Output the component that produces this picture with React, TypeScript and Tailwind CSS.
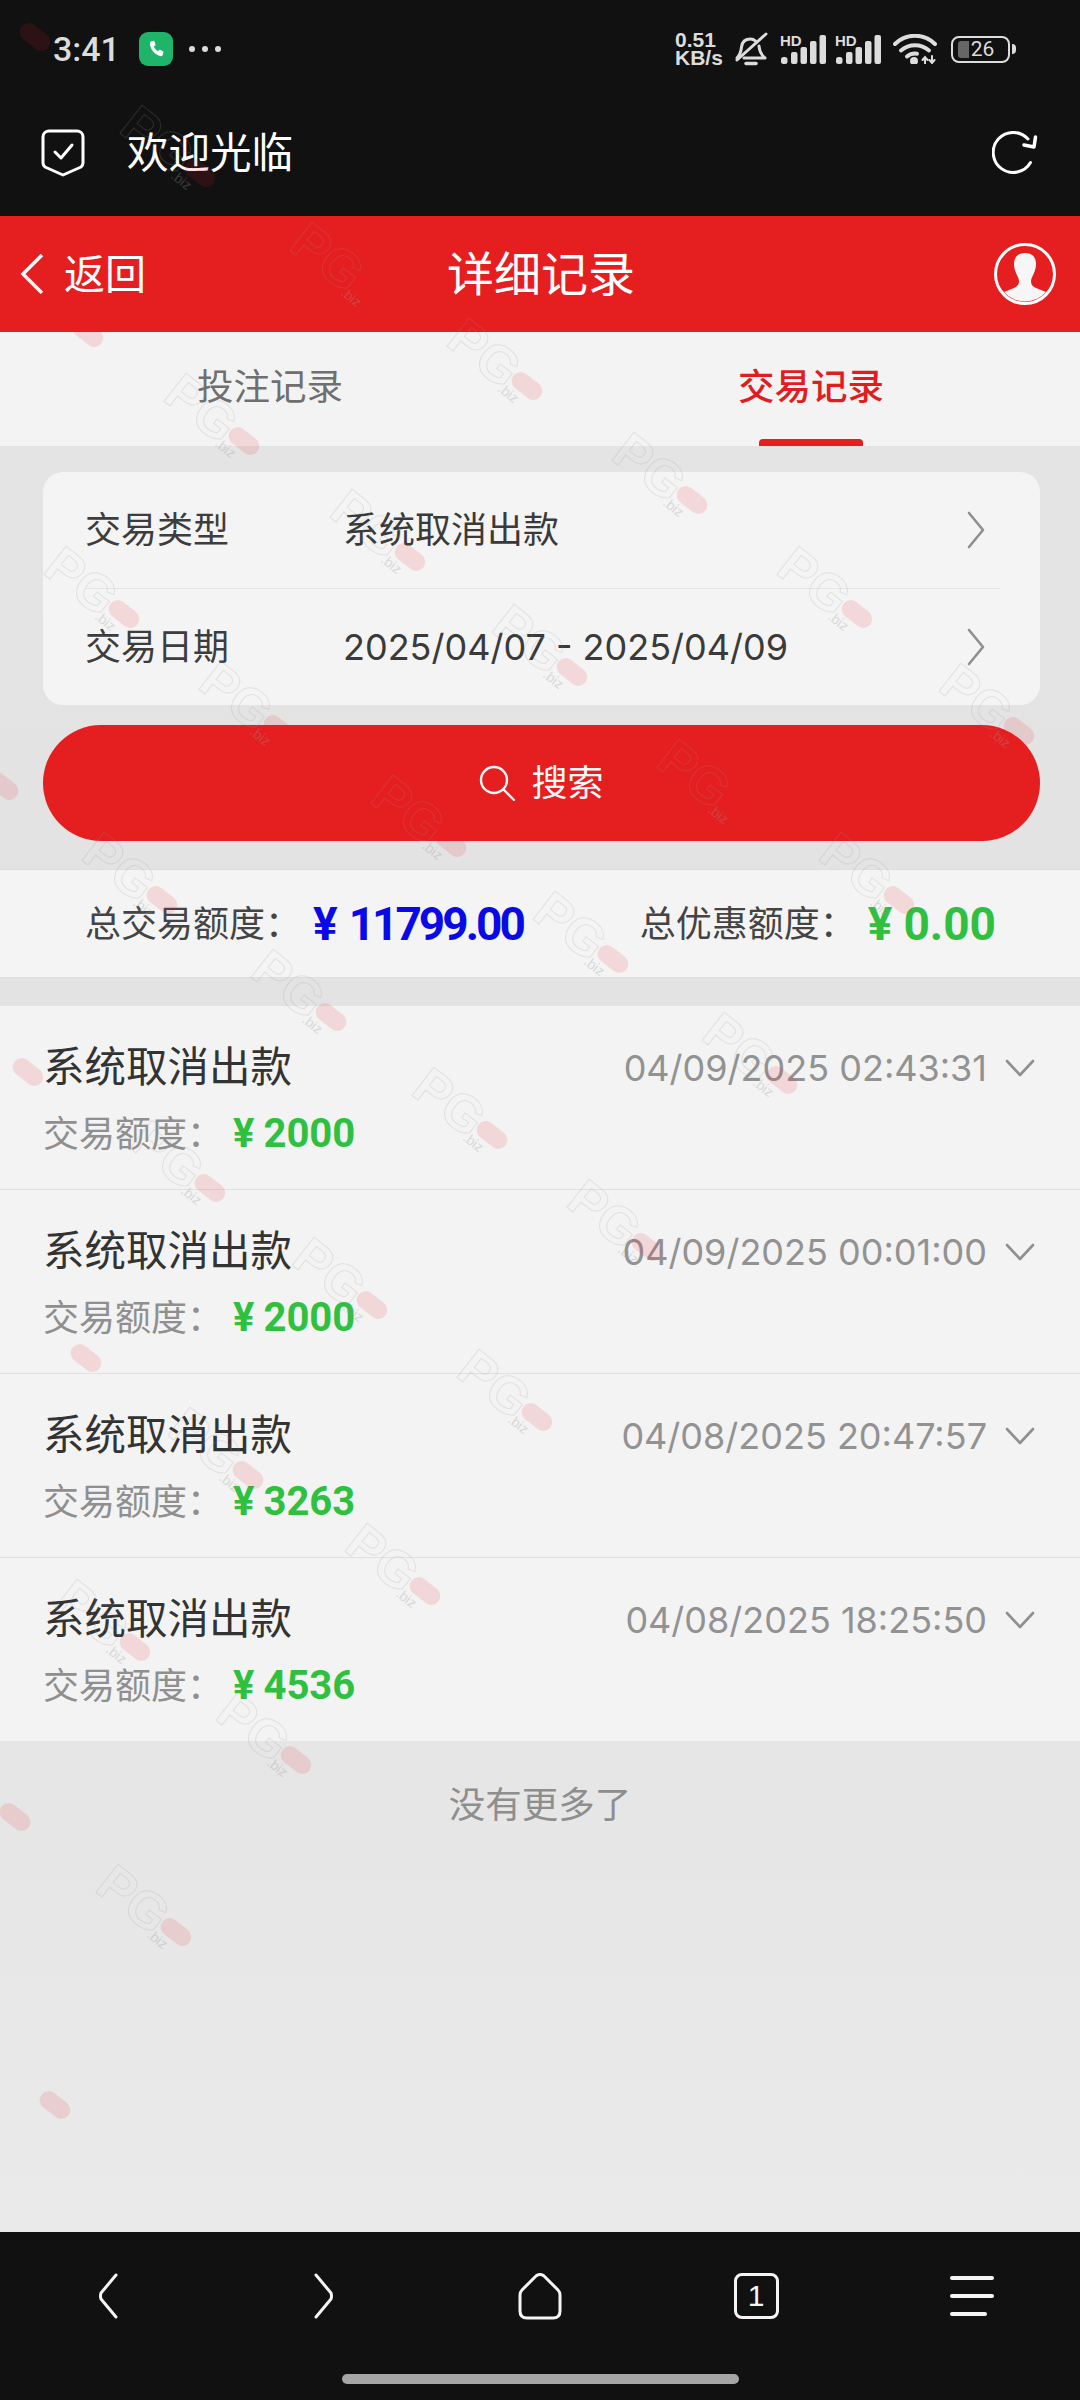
const font = "font-['Inter','Noto_Sans_CJK_SC',sans-serif]";

// centre of the red pill of each faint PG.biz stamp on the page
const stamps = [
  [35, 37], [200, 173], [88, 333], [370, 290], [527, 386], [244, 441], [692, 500], [410, 557],
  [124, 614], [857, 614], [572, 672], [279, 729], [1019, 731], [3, 786], [737, 807], [451, 843],
  [162, 900], [899, 900], [613, 959], [331, 1017], [28, 1072], [782, 1080], [492, 1135],
  [210, 1188], [647, 1247], [372, 1305], [86, 1358], [537, 1417], [248, 1475], [425, 1591],
  [135, 1647], [296, 1760], [15, 1817], [176, 1932], [55, 2105],
];

function Stamp({ x, y }: { x: number; y: number }) {
  return (
    <div
      className="absolute flex h-[36px] w-[108px] origin-[91px_18px] rotate-[38deg] items-center font-['Liberation_Sans',sans-serif]"
      style={{ left: x - 91, top: y - 18 }}
    >
      {x >= 90 && y >= 60 && (
        <span className="text-[52px] leading-none font-bold text-transparent opacity-[0.2] [-webkit-text-stroke:1px_#999]">PG</span>
      )}
      <span className="absolute left-[74px] h-[18px] w-[34px] rounded-full bg-[#f0202a] opacity-[0.13]" />
      {x >= 90 && y >= 60 && (
        <span className="absolute top-[28px] left-[70px] text-[14px] leading-none text-[#999] opacity-[0.3]">.biz</span>
      )}
    </div>
  );
}

function Signal() {
  return (
    <div className="relative h-[30px] w-[46px]">
      <span className="absolute top-[-1px] left-0 text-[15px] leading-none font-bold text-[#dcdcdc] font-['Liberation_Sans',sans-serif]">HD</span>
      <svg viewBox="0 0 46 30" className="h-[30px] w-[46px]" fill="#dcdcdc">
        <rect x="1" y="23" width="6.500" height="7" rx="2.500" />
        <rect x="11" y="18" width="6.500" height="12" rx="2" />
        <rect x="20.500" y="13" width="6.500" height="17" rx="2" />
        <rect x="30" y="7" width="6.500" height="23" rx="2" />
        <rect x="39.500" y="1" width="6.500" height="29" rx="2" />
      </svg>
    </div>
  );
}

function StatusBar() {
  return (
    <div className="flex h-[98px] shrink-0 items-center pr-[64px] pl-[53px] text-[#dcdcdc]">
      <span className="text-[34px] leading-none font-medium font-['Roboto',sans-serif]">3:41</span>
      <div className="ml-[19px] flex h-[34px] w-[34px] items-center justify-center rounded-[9px] bg-[#1fb46a]">
        <svg viewBox="0 0 24 24" className="h-[22px] w-[22px]" fill="#fff">
          <path d="M7 3.500 10 3l1.600 4.600-2 1.800c.8 2 2.500 4 4.600 5l2-1.800 4 2.400-.8 3.400c-.3 1-1.200 1.600-2.200 1.400C10.800 18.500 5.400 12 5.400 5.600 5.400 4.600 6 3.700 7 3.500Z" />
        </svg>
      </div>
      <div className="ml-[16px] flex gap-[7px]">
        <span className="h-[6px] w-[6px] rounded-full bg-[#dcdcdc]" />
        <span className="h-[6px] w-[6px] rounded-full bg-[#dcdcdc]" />
        <span className="h-[6px] w-[6px] rounded-full bg-[#dcdcdc]" />
      </div>
      <div className="ml-auto flex w-[50px] flex-col text-[21px] leading-[18px] font-bold font-['Liberation_Sans',sans-serif]">
        <span>0.51</span>
        <span>KB/s</span>
      </div>
      <svg viewBox="0 0 34 34" className="ml-[9px] h-[34px] w-[34px]" fill="none" stroke="#dcdcdc" strokeWidth="3" strokeLinecap="round" strokeLinejoin="round">
        <path d="M3 26c3-3 4-6 4.500-11 .6-5 4-8 9-8 2 0 3.500.6 5 2M25 14c.3 4 1 8 6 12H10" />
        <path d="M3 28 32 2" />
        <path d="M12 31.500h10" strokeWidth="3.500" />
      </svg>
      <div className="ml-[12px]">
        <Signal />
      </div>
      <div className="ml-[9px]">
        <Signal />
      </div>
      <svg viewBox="0 0 44 30" className="ml-[12px] h-[30px] w-[44px]" fill="none" stroke="#dcdcdc" strokeWidth="4" strokeLinecap="round">
        <path d="M2 10C13-1 31-1 42 10" />
        <path d="M8 16.500c8-7 20-7 28 0" />
        <path d="M14 22.500c3-2.500 6-3.200 10-2.800" />
        <circle cx="21" cy="27" r="2" fill="#dcdcdc" />
        <path d="M32 30v-6m-2.500 2 2.500-3 2.500 3M39 22v6m-2.500-2 2.500 3 2.500-3" strokeWidth="2" />
      </svg>
      <div className="ml-[14px] flex items-center gap-[2px]">
        <div className="relative flex h-[27px] w-[59px] items-center justify-center overflow-hidden rounded-[8px] border-2 border-[#dcdcdc] text-[21px] leading-none font-['Roboto',sans-serif]">
          <span className="absolute top-[3px] bottom-[3px] left-[5px] w-[11px] rounded-l-[3px] bg-[#666]" />
          <span className="relative pl-[4px]">26</span>
        </div>
        <span className="h-[10px] w-[4px] rounded-r-full bg-[#dcdcdc]" />
      </div>
    </div>
  );
}

function BrowserBar() {
  return (
    <div className="flex h-[118px] shrink-0 items-center pr-[42px] pl-[41px] pb-[8px] text-white">
      <svg viewBox="0 0 44 48" className="h-[48px] w-[44px]" fill="none" stroke="#fff" strokeWidth="3" strokeLinecap="round" strokeLinejoin="round">
        <path d="M8 2h28c3 0 6 2 6 6v26c0 2-1 3-2 4l-18 8L4 38c-1-1-2-2-2-4V8c0-4 3-6 6-6Z" />
        <path d="m14 23 6 6 11-13" />
      </svg>
      <span className="mb-[4px] ml-[42px] text-[41.500px] leading-none font-['Noto_Sans_CJK_SC',sans-serif]">欢迎光临</span>
      <svg viewBox="0 0 46 44" className="ml-auto h-[44px] w-[46px]" fill="none" stroke="#fff" strokeWidth="3" strokeLinecap="round" strokeLinejoin="round">
        <path d="M38.500 31.500A20 20 0 1 1 36 8" />
        <path d="m32 14 10 2 1.500-10" strokeWidth="3.500" />
      </svg>
    </div>
  );
}

function RedHeader() {
  return (
    <div className="grid h-[116px] shrink-0 grid-cols-[1fr_auto_1fr] items-center bg-[#e51e20] px-[20px] text-white">
      <div className="flex items-center">
        <svg viewBox="0 0 24 40" className="h-[40px] w-[24px]" fill="none" stroke="#f8f8f8" strokeWidth="3.500">
          <path d="M22 1 3 20l19 19" />
        </svg>
        <span className="ml-[20px] text-[41px] leading-none">返回</span>
      </div>
      <span className="pb-[2px] pl-[2px] text-[47px] leading-none">详细记录</span>
      <svg viewBox="0 0 62 62" className="mr-[4px] h-[62px] w-[62px] justify-self-end">
        <circle cx="31" cy="31" r="29.500" fill="none" stroke="#fff" strokeWidth="3" />
        <path fill="#f6f6f6" d="M31 10c7 0 11 4 11 11 0 2-.5 6-2 9-1 3-3 5-3 8 0 3 1 5 5 7l10 4A28 28 0 0 1 10 49l10-4c4-2 5-4 5-7 0-3-2-5-3-8-1.500-3-2-7-2-9 0-7 4-11 11-11Z" />
      </svg>
    </div>
  );
}

function Tabs() {
  return (
    <div className="grid h-[114px] shrink-0 grid-cols-2 bg-[#f3f3f3] text-[36.500px] leading-none">
      <div className="flex items-center justify-center pb-[3px] text-[#6f6f6f]">投注记录</div>
      <div className="relative flex items-center justify-center pb-[3px] pl-[2px] font-medium text-[#e01e22]">
        交易记录
        <span className="absolute bottom-0 left-[219px] h-[7px] w-[104px] rounded-t-[4px] bg-[#e51e20]" />
      </div>
    </div>
  );
}

function FilterRow({ label, value }: { label: string; value: string }) {
  return (
    <div className="flex h-[116px] items-center pr-[54px] pl-[42px]">
      <span className="w-[258px] text-[36px] text-[#3d3d3d]">{label}</span>
      <span className="flex-1 text-[36px] text-[#3a3a3a]">{value}</span>
      <svg viewBox="0 0 20 38" className="h-[38px] w-[20px]" fill="none" stroke="#8f8f8f" strokeWidth="2.600" strokeLinecap="round" strokeLinejoin="round">
        <path d="m3 2 14 17L3 36" />
      </svg>
    </div>
  );
}

function Amount({ value, big, tight }: { value: string; big?: boolean; tight?: boolean }) {
  return (
    <span className={`flex items-center leading-none font-bold font-['Roboto',sans-serif] ${big ? "text-[46px]" : "text-[40px]"}`}>
      <span className={big ? "mr-[11px]" : "mr-[9px]"}>¥</span>
      <span className={tight ? "tracking-[-3px]" : ""}>{value}</span>
    </span>
  );
}

const records = [
  { time: "04/09/2025 02:43:31", amount: "2000" },
  { time: "04/09/2025 00:01:00", amount: "2000" },
  { time: "04/08/2025 20:47:57", amount: "3263" },
  { time: "04/08/2025 18:25:50", amount: "4536" },
];

function BottomNav() {
  return (
    <div className="flex h-[168px] shrink-0 flex-col bg-[#111111]">
      <div className="grid h-[142px] grid-cols-5 items-center justify-items-center pb-[14px]">
        <svg viewBox="0 0 20 46" className="h-[46px] w-[20px]" fill="none" stroke="#f5f5f5" strokeWidth="3" strokeLinecap="round" strokeLinejoin="round">
          <path d="M18 2 3 20q-1 3 0 6l15 18" />
        </svg>
        <svg viewBox="0 0 20 46" className="h-[46px] w-[20px]" fill="none" stroke="#f5f5f5" strokeWidth="3" strokeLinecap="round" strokeLinejoin="round">
          <path d="m2 2 15 18q1 3 0 6L2 44" />
        </svg>
        <svg viewBox="0 0 44 47" className="h-[47px] w-[44px]" fill="none" stroke="#f5f5f5" strokeWidth="3" strokeLinejoin="round">
          <path d="M18 3q4-3 8 0l14 14q2 2 2 5v16q0 7-7 7H9q-7 0-7-7V22q0-3 2-5Z" />
        </svg>
        <div className="flex h-[46px] w-[45px] items-center justify-center rounded-[8px] border-[3px] border-[#f5f5f5] text-[30px] leading-none text-[#f5f5f5] font-['Liberation_Sans',sans-serif]">
          1
        </div>
        <div className="flex w-[44px] flex-col gap-[14px]">
          <span className="h-[4px] w-[44px] rounded-full bg-[#f5f5f5]" />
          <span className="h-[4px] w-[44px] rounded-full bg-[#f5f5f5]" />
          <span className="h-[4px] w-[37px] rounded-full bg-[#f5f5f5]" />
        </div>
      </div>
      <div className="flex justify-center">
        <span className="h-[10px] w-[397px] rounded-full bg-[#a6a6a6]" />
      </div>
    </div>
  );
}

export default function App() {
  return (
    <div className={`relative flex h-[2400px] w-[1080px] flex-col overflow-hidden bg-[#111111] ${font}`}>
      <StatusBar />
      <BrowserBar />
      <RedHeader />
      <Tabs />

      <div className="flex min-h-0 flex-1 flex-col bg-gradient-to-b from-[#e4e4e4] via-[#e2e2e2] to-[#eaeaea]">
        <div className="flex flex-col pt-[26px] pr-[40px] pl-[43px]">
          <div className="rounded-[20px] bg-[#f4f4f4] leading-none">
            <FilterRow label="交易类型" value="系统取消出款" />
            <div className="mr-[40px] ml-[42px] h-[1px] bg-[#e6e6e6]" />
            <FilterRow label="交易日期" value="2025/04/07 - 2025/04/09" />
          </div>
          <button className="mt-[20px] flex h-[116px] items-center justify-center gap-[16px] rounded-full bg-[#e51e20] text-[36px] leading-none text-[#f8f8f8]">
            <svg viewBox="0 0 36 36" className="h-[36px] w-[36px]" fill="none" stroke="#f8f8f8" strokeWidth="2.400" strokeLinecap="round">
              <circle cx="15" cy="15" r="13" />
              <path d="m25 25 10 10" />
            </svg>
            搜索
          </button>
        </div>

        <div className="mt-[28px] flex h-[109px] items-center justify-between border-y border-[#dedede] bg-[#f4f4f4] pr-[84px] pl-[85px] text-[36px] leading-none text-[#444]">
          <div className="flex items-center">
            <span>总交易额度：</span>
            <span className="ml-[12px] text-[#0a0ae6]"><Amount value="11799.00" big tight /></span>
          </div>
          <div className="flex items-center">
            <span>总优惠额度：</span>
            <span className="ml-[12px] text-[#2fc040]"><Amount value="0.00" big /></span>
          </div>
        </div>

        <div className="mt-[28px] flex flex-col bg-[#f3f3f3]">
          {records.map((r, i) => (
            <div
              key={r.time}
              className={i < 3 ? "flex h-[184px] flex-col border-b border-[#e0e0e0] pt-[39px] pr-[45px] pl-[43px]" : "flex h-[183px] flex-col pt-[39px] pr-[45px] pl-[43px]"}
            >
              <div className="flex h-[46px] items-center">
                <span className="text-[41.500px] leading-none text-[#333]">系统取消出款</span>
                <span className="ml-auto text-[36px] leading-none text-[#929292]">{r.time}</span>
                <svg viewBox="0 0 30 18" className="ml-[18px] h-[18px] w-[30px]" fill="none" stroke="#8f8f8f" strokeWidth="2.600" strokeLinecap="round" strokeLinejoin="round">
                  <path d="m2 2 13 14L28 2" />
                </svg>
              </div>
              <div className="mt-[21px] flex h-[44px] items-center">
                <span className="text-[36px] leading-none text-[#8f8f8f]">交易额度：</span>
                <span className="ml-[10px] text-[#2fc040]"><Amount value={r.amount} /></span>
              </div>
            </div>
          ))}
        </div>

        <div className="mt-[46px] text-center text-[36.500px] leading-none text-[#8e8e8e]">没有更多了</div>
      </div>

      <BottomNav />

      <div className="pointer-events-none absolute inset-0">
        {stamps.map(([x, y]) => (
          <Stamp key={`${x}-${y}`} x={x} y={y} />
        ))}
      </div>
    </div>
  );
}
